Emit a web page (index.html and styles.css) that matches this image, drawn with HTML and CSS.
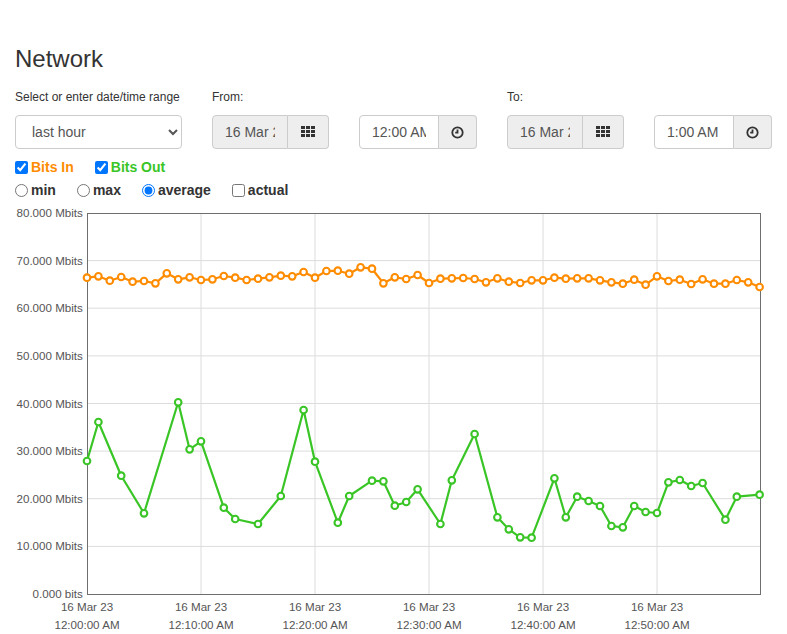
FILE: index.html
```html
<!DOCTYPE html>
<html lang="en">
<head>
<meta charset="utf-8">
<title>Network</title>
<link rel="stylesheet" href="styles.css">
</head>
<body>
<div class="page">
  <h1 class="title">Network</h1>

  <div class="range-row">
    <div class="field field-range">
      <label class="field-label" for="range">Select or enter date/time range</label>
      <select id="range" class="select">
        <option>last hour</option>
        <option>last day</option>
        <option>last week</option>
      </select>
    </div>

    <div class="field">
      <label class="field-label">From:</label>
      <div class="pair">
        <div class="input-group date-group">
          <input class="text-input readonly" type="text" value="16 Mar 23" readonly>
          <span class="addon date-addon">
            <svg class="icon-grid" width="14" height="11" viewBox="0 0 14 11" aria-hidden="true">
              <rect x="0" y="0" width="4" height="3"/><rect x="5" y="0" width="4" height="3"/><rect x="10" y="0" width="4" height="3"/>
              <rect x="0" y="4" width="4" height="3"/><rect x="5" y="4" width="4" height="3"/><rect x="10" y="4" width="4" height="3"/>
              <rect x="0" y="8" width="4" height="3"/><rect x="5" y="8" width="4" height="3"/><rect x="10" y="8" width="4" height="3"/>
            </svg>
          </span>
        </div>
        <div class="input-group time-group">
          <input class="text-input" type="text" value="12:00 AM">
          <span class="addon time-addon">
            <svg class="icon-clock" width="13" height="13" viewBox="0 0 13 13" aria-hidden="true">
              <circle cx="6.5" cy="6.5" r="5.2"/>
              <path d="M6.5 3.4 V6.7 H4.2"/>
            </svg>
          </span>
        </div>
      </div>
    </div>

    <div class="field">
      <label class="field-label">To:</label>
      <div class="pair">
        <div class="input-group date-group">
          <input class="text-input readonly" type="text" value="16 Mar 23" readonly>
          <span class="addon date-addon">
            <svg class="icon-grid" width="14" height="11" viewBox="0 0 14 11" aria-hidden="true">
              <rect x="0" y="0" width="4" height="3"/><rect x="5" y="0" width="4" height="3"/><rect x="10" y="0" width="4" height="3"/>
              <rect x="0" y="4" width="4" height="3"/><rect x="5" y="4" width="4" height="3"/><rect x="10" y="4" width="4" height="3"/>
              <rect x="0" y="8" width="4" height="3"/><rect x="5" y="8" width="4" height="3"/><rect x="10" y="8" width="4" height="3"/>
            </svg>
          </span>
        </div>
        <div class="input-group time-group">
          <input class="text-input" type="text" value="1:00 AM">
          <span class="addon time-addon">
            <svg class="icon-clock" width="13" height="13" viewBox="0 0 13 13" aria-hidden="true">
              <circle cx="6.5" cy="6.5" r="5.2"/>
              <path d="M6.5 3.4 V6.7 H4.2"/>
            </svg>
          </span>
        </div>
      </div>
    </div>
  </div>

  <div class="option-row option-row-first">
    <label class="opt"><input type="checkbox" checked><span class="opt-text bits-in">Bits In</span></label>
    <label class="opt"><input type="checkbox" checked><span class="opt-text bits-out">Bits Out</span></label>
  </div>
  <div class="option-row">
    <label class="opt"><input type="radio" name="agg"><span class="opt-text">min</span></label>
    <label class="opt"><input type="radio" name="agg"><span class="opt-text">max</span></label>
    <label class="opt"><input type="radio" name="agg" checked><span class="opt-text">average</span></label>
    <label class="opt"><input type="checkbox"><span class="opt-text">actual</span></label>
  </div>

  <svg class="chart" width="787" height="433" viewBox="0 201 787 433" aria-label="Network traffic chart">
    <defs>
      <marker id="dot-in" markerWidth="12" markerHeight="12" refX="6" refY="6" markerUnits="userSpaceOnUse">
        <circle cx="6" cy="6" r="3.3" fill="#fff" stroke="#ff8c00" stroke-width="2.1"/>
      </marker>
      <marker id="dot-out" markerWidth="12" markerHeight="12" refX="6" refY="6" markerUnits="userSpaceOnUse">
        <circle cx="6" cy="6" r="3.3" fill="#fff" stroke="#3ac526" stroke-width="2.1"/>
      </marker>
    </defs>

    <g class="grid">
      <line x1="87" y1="260.6" x2="760" y2="260.6"/>
      <line x1="87" y1="308.2" x2="760" y2="308.2"/>
      <line x1="87" y1="355.9" x2="760" y2="355.9"/>
      <line x1="87" y1="403.5" x2="760" y2="403.5"/>
      <line x1="87" y1="451.1" x2="760" y2="451.1"/>
      <line x1="87" y1="498.7" x2="760" y2="498.7"/>
      <line x1="87" y1="546.4" x2="760" y2="546.4"/>
      <line x1="201" y1="213" x2="201" y2="594"/>
      <line x1="315" y1="213" x2="315" y2="594"/>
      <line x1="429" y1="213" x2="429" y2="594"/>
      <line x1="543" y1="213" x2="543" y2="594"/>
      <line x1="657" y1="213" x2="657" y2="594"/>
    </g>
    <rect class="frame" x="87.5" y="213.5" width="673" height="381"/>

    <g class="ylabels">
      <text x="16.5" y="217">80.000 Mbits</text>
      <text x="16.5" y="264.6">70.000 Mbits</text>
      <text x="16.5" y="312.2">60.000 Mbits</text>
      <text x="16.5" y="359.9">50.000 Mbits</text>
      <text x="16.5" y="407.5">40.000 Mbits</text>
      <text x="16.5" y="455.1">30.000 Mbits</text>
      <text x="16.5" y="502.7">20.000 Mbits</text>
      <text x="16.5" y="550.4">10.000 Mbits</text>
      <text x="32.6" y="598">0.000 bits</text>
    </g>

    <g class="xlabels">
      <text x="87" y="611">16 Mar 23</text><text x="87" y="628.5">12:00:00 AM</text>
      <text x="201" y="611">16 Mar 23</text><text x="201" y="628.5">12:10:00 AM</text>
      <text x="315" y="611">16 Mar 23</text><text x="315" y="628.5">12:20:00 AM</text>
      <text x="429" y="611">16 Mar 23</text><text x="429" y="628.5">12:30:00 AM</text>
      <text x="543" y="611">16 Mar 23</text><text x="543" y="628.5">12:40:00 AM</text>
      <text x="657" y="611">16 Mar 23</text><text x="657" y="628.5">12:50:00 AM</text>
    </g>

    <polyline class="series series-out" marker-start="url(#dot-out)" marker-mid="url(#dot-out)" marker-end="url(#dot-out)"
      points="87,461 98.4,422 121.2,475.7 144,513.3 178.2,402.3 189.6,449.3 201,441.3 223.8,507.7 235.2,519 258,524 280.8,496 303.6,410 315,461.7 337.8,522.7 349.2,496 372,480.7 383.4,481.3 394.8,505.7 406.2,502 417.6,489.3 440.4,524 451.8,480.3 474.6,434 497.4,517.3 508.8,529.3 520.2,537.3 531.6,537.7 554.4,478.3 565.8,517.3 577.2,496.7 588.6,501 600,506 611.4,526 622.8,527.3 634.2,506 645.6,512 657,513 668.4,482.3 679.8,480 691.2,486 702.6,483 725.4,519.7 736.8,496.7 759.6,494.7"/>

    <polyline class="series series-in" marker-start="url(#dot-in)" marker-mid="url(#dot-in)" marker-end="url(#dot-in)"
      points="87,277.7 98.4,276.3 109.8,280.7 121.2,277 132.6,281.7 144,281 155.4,283.3 166.8,273.3 178.2,279.3 189.6,277.3 201,280 212.4,279.3 223.8,276 235.2,277.7 246.6,280 258,278.7 269.4,277.3 280.8,275.7 292.2,276.3 303.6,272 315,277.7 326.4,271 337.8,270.7 349.2,273.7 360.6,267.3 372,268.7 383.4,283.3 394.8,277.3 406.2,279 417.6,275 429,283 440.4,278.7 451.8,278.3 463.2,278 474.6,279 486,282.3 497.4,278.3 508.8,281.7 520.2,283 531.6,280.3 543,280.3 554.4,277.7 565.8,278.7 577.2,278.3 588.6,278.3 600,280.3 611.4,282.3 622.8,283.7 634.2,279.7 645.6,284.7 657,276.3 668.4,281 679.8,279.7 691.2,284 702.6,279.3 714,283.7 725.4,283.7 736.8,280 748.2,282.3 759.6,287"/>
  </svg>
</div>
</body>
</html>
```

FILE: styles.css
```css
* {
  box-sizing: border-box;
}

html, body {
  margin: 0;
  padding: 0;
  background: #fff;
}

body {
  font-family: "Liberation Sans", Arial, Helvetica, sans-serif;
  color: #333;
  font-size: 14px;
}

.page {
  width: 787px;
}

.title {
  margin: 46px 15px 17px;
  font-size: 24px;
  line-height: 26.4px;
  font-weight: 400;
  color: #333;
}

.range-row {
  display: flex;
  gap: 30px;
  padding: 0 15px;
}

.field {
  display: flex;
  flex-direction: column;
}

.field-range {
  width: 167px;
}

.field-label {
  display: block;
  font-size: 12px;
  line-height: 17px;
  margin-bottom: 9px;
  color: #333;
}

.select {
  width: 167px;
  height: 34px;
  padding: 6px 12px;
  font-family: inherit;
  font-size: 14px;
  color: #555;
  background-color: #fff;
  border: 1px solid #ccc;
  border-radius: 4px;
}

.pair {
  display: flex;
  gap: 30px;
}

.input-group {
  display: flex;
  height: 34px;
}

.date-group {
  width: 117px;
}

.time-group {
  width: 118px;
}

.text-input {
  flex: 1 1 auto;
  min-width: 0;
  width: 0;
  height: 34px;
  padding: 6px 12px;
  font-family: inherit;
  font-size: 14px;
  color: #555;
  background: #fff;
  border: 1px solid #ccc;
  border-radius: 4px 0 0 4px;
  outline: none;
}

.text-input.readonly {
  background: #eee;
}

.addon {
  display: flex;
  align-items: center;
  justify-content: center;
  flex: 0 0 auto;
  height: 34px;
  background: #eee;
  border: 1px solid #ccc;
  border-left: 0;
  border-radius: 0 4px 4px 0;
}

.date-addon {
  width: 41px;
}

.time-addon {
  width: 38px;
}

.icon-grid {
  display: block;
  fill: #333;
  margin-top: -2px;
}

.icon-clock {
  display: block;
  fill: none;
  stroke: #333;
  stroke-width: 1.8;
}

.option-row {
  display: flex;
  align-items: center;
  height: 23px;
  padding: 0 15px;
}

.option-row-first {
  margin-top: 7px;
}

.opt {
  display: flex;
  align-items: center;
  margin-right: 21px;
  font-size: 14px;
  line-height: 23px;
  font-weight: 700;
  color: #333;
}

.opt input {
  width: 13px;
  height: 13px;
  margin: 0 3px 0 0;
}

.bits-in {
  color: #ff8c00;
}

.bits-out {
  color: #3ac526;
}

.chart {
  display: block;
  margin-top: -1px;
  font-family: "Liberation Sans", Arial, Helvetica, sans-serif;
}

.grid line {
  stroke: #dcdcdc;
  stroke-width: 1;
}

.frame {
  fill: none;
  stroke: #6e6e6e;
  stroke-width: 1;
}

.ylabels text {
  font-size: 11.6px;
  fill: #555;
  text-anchor: start;
}

.xlabels text {
  font-size: 11.6px;
  fill: #555;
  text-anchor: middle;
}

.series {
  fill: none;
  stroke-width: 2.2;
  stroke-linejoin: round;
}

.series-in {
  stroke: #ff8c00;
}

.series-out {
  stroke: #3ac526;
}
```
